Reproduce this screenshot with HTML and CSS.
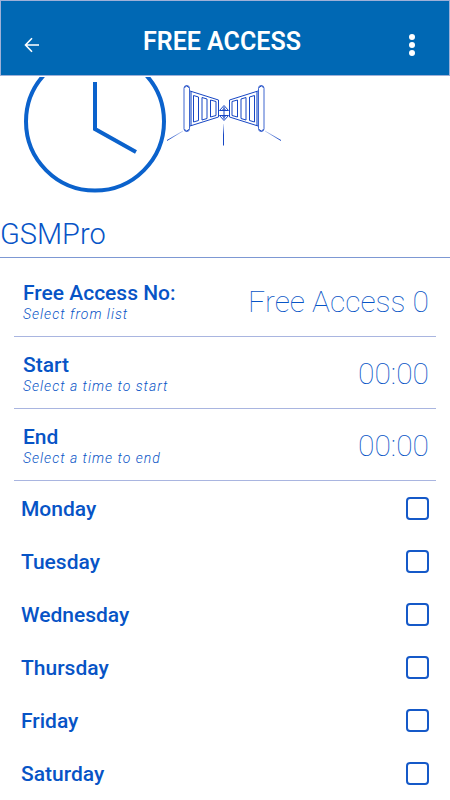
FILE: index.html
```html
<!DOCTYPE html>
<html lang="en">
<head>
<meta charset="utf-8">
<meta name="viewport" content="width=device-width, initial-scale=1">
<title>Free Access</title>
<link rel="stylesheet" href="styles.css">
</head>
<body>
<header class="bar">
  <button class="bar-button" type="button" aria-label="Back">
    <svg width="16" height="16" viewBox="0 0 16 16" fill="none" stroke="currentColor" stroke-width="1.6"><path d="M15 8H2M8 1.2 1.5 8 8 14.8"/></svg>
  </button>
  <h1 class="bar-title">FREE ACCESS</h1>
  <button class="bar-button" type="button" aria-label="More options">
    <svg width="8" height="24" viewBox="0 0 8 24" fill="currentColor"><circle cx="4" cy="4" r="3"/><circle cx="4" cy="12" r="3"/><circle cx="4" cy="20" r="3"/></svg>
  </button>
</header>
<main>
  <div class="hero">
    <svg width="142" height="116" viewBox="24 77 142 116" fill="none" stroke="#0b62cc" stroke-width="4"><circle cx="95" cy="121.500" r="69"/><path d="M95 82V129L136 152"/></svg>
    <svg width="116" height="116" viewBox="166 77 116 116" fill="none" stroke="#1646c4" stroke-width="1">
      <defs>
        <linearGradient id="fade-left" x1="1" x2="0"><stop stop-color="#cdd9f5"/><stop offset="1" stop-color="#1646c4"/></linearGradient>
        <linearGradient id="fade-right"><stop stop-color="#cdd9f5"/><stop offset="1" stop-color="#1646c4"/></linearGradient>
        <linearGradient id="fade-down" x2="0" y2="1"><stop stop-color="#dfe7f8"/><stop offset=".5" stop-color="#1646c4"/></linearGradient>
        <g id="leaf">
          <rect x="184" y="85.500" width="5.500" height="46" rx="2.700" stroke="#3f66cf"/>
          <path d="M184.500 87.500q2-3 4.500 0M184.500 129.500q2 3 4.500 0"/>
          <path d="M191 91.500V126" stroke="#7d9ae0" stroke-width="2"/>
          <path d="M190 91 218.500 100V117L190 126"/>
          <path d="M193.500 95.500 198.500 97V120.500L193.500 122ZM202 97.500 207 99V118.500L202 120ZM210.500 100 216 101.500V115.500L210.500 117Z"/>
        </g>
      </defs>
      <use href="#leaf"/>
      <use href="#leaf" transform="matrix(-1 0 0 1 448 0)"/>
      <path d="M219.500 110.500 224 105.500 228.500 110.500ZM219.500 115.500 224 120.500 228.500 115.500ZM224 107V119M221.500 111 224 108.500 226.500 111M221.500 115 224 117.500 226.500 115"/>
      <path d="M183 131 167 140.500" stroke="url(#fade-left)"/>
      <path d="M265 131 281 140.500" stroke="url(#fade-right)"/>
      <path d="M223 124H224V145.500H223Z" fill="url(#fade-down)" stroke="none"/>
    </svg>
  </div>
  <h2 class="device">GSMPro</h2>
  <form>
    <div class="settings">
      <div class="setting">
        <label class="setting-label" for="access">Free Access No:<span class="hint">Select from list</span></label>
        <select class="value" id="access"><option>Free Access 0</option></select>
      </div>
      <div class="setting">
        <label class="setting-label" for="start">Start<span class="hint">Select a time to start</span></label>
        <input class="value" id="start" type="text" value="00:00">
      </div>
      <div class="setting">
        <label class="setting-label" for="end">End<span class="hint">Select a time to end</span></label>
        <input class="value" id="end" type="text" value="00:00">
      </div>
    </div>
    <div class="days">
      <label class="day">Monday<input class="tick" type="checkbox"></label>
      <label class="day">Tuesday<input class="tick" type="checkbox"></label>
      <label class="day">Wednesday<input class="tick" type="checkbox"></label>
      <label class="day">Thursday<input class="tick" type="checkbox"></label>
      <label class="day">Friday<input class="tick" type="checkbox"></label>
      <label class="day">Saturday<input class="tick" type="checkbox"></label>
    </div>
  </form>
</main>
</body>
</html>
```
FILE: styles.css
```css
* { box-sizing: border-box; }

body {
  margin: 0;
  background: #fff;
  color: #0754c6;
  font-family: Roboto, "Liberation Sans", sans-serif;
}

.bar {
  display: flex;
  align-items: center;
  justify-content: space-between;
  padding: 14px 25px 0 19px;
  height: 76px;
  border: 1px solid #9eb0d8;
  background: #0068b4;
  color: #fff;
}

.bar-button {
  display: grid;
  place-items: center;
  width: 24px;
  height: 32px;
  padding: 0;
  border: 0;
  background: none;
  color: inherit;
}

.bar-title {
  margin: 0;
  padding-bottom: 6px;
  font-size: 25px;
  line-height: 30px;
  font-weight: 600;
}

.hero {
  display: flex;
  margin-top: 1px;
  padding-left: 24px;
}

.hero svg { display: block; }

.device {
  margin: 0;
  padding: 23px 0 5px;
  border-bottom: 1px solid #7d98d3;
  font-size: 29px;
  line-height: 36px;
  font-weight: 300;
}

.settings { padding: 7px 14px 0; }

.setting {
  display: flex;
  align-items: center;
  justify-content: space-between;
  height: 72px;
  padding: 2px 7px 0 9px;
  border-bottom: 1px solid #a9b5e0;
}

.setting-label {
  flex: none;
  font-size: 21px;
  line-height: 24px;
  font-weight: 500;
}

.hint {
  display: block;
  font-size: 14px;
  line-height: 18px;
  font-weight: 300;
  font-style: italic;
  letter-spacing: 1px;
}

.value {
  flex: 1;
  min-width: 0;
  appearance: none;
  padding: 0;
  border: 0;
  background: none;
  color: inherit;
  font: 100 30px/36px Roboto, "Liberation Sans", sans-serif;
  text-align: right;
  text-align-last: right;
}

.days { padding: 1px 21px 0; }

.day {
  display: flex;
  align-items: center;
  justify-content: space-between;
  height: 53px;
  font-size: 21px;
  line-height: 26px;
  font-weight: 500;
}

.tick {
  appearance: none;
  width: 23px;
  height: 23px;
  margin: 0;
  border: 2px solid #1559c8;
  border-radius: 4px;
}

.tick:checked { background: #1559c8; }
```
